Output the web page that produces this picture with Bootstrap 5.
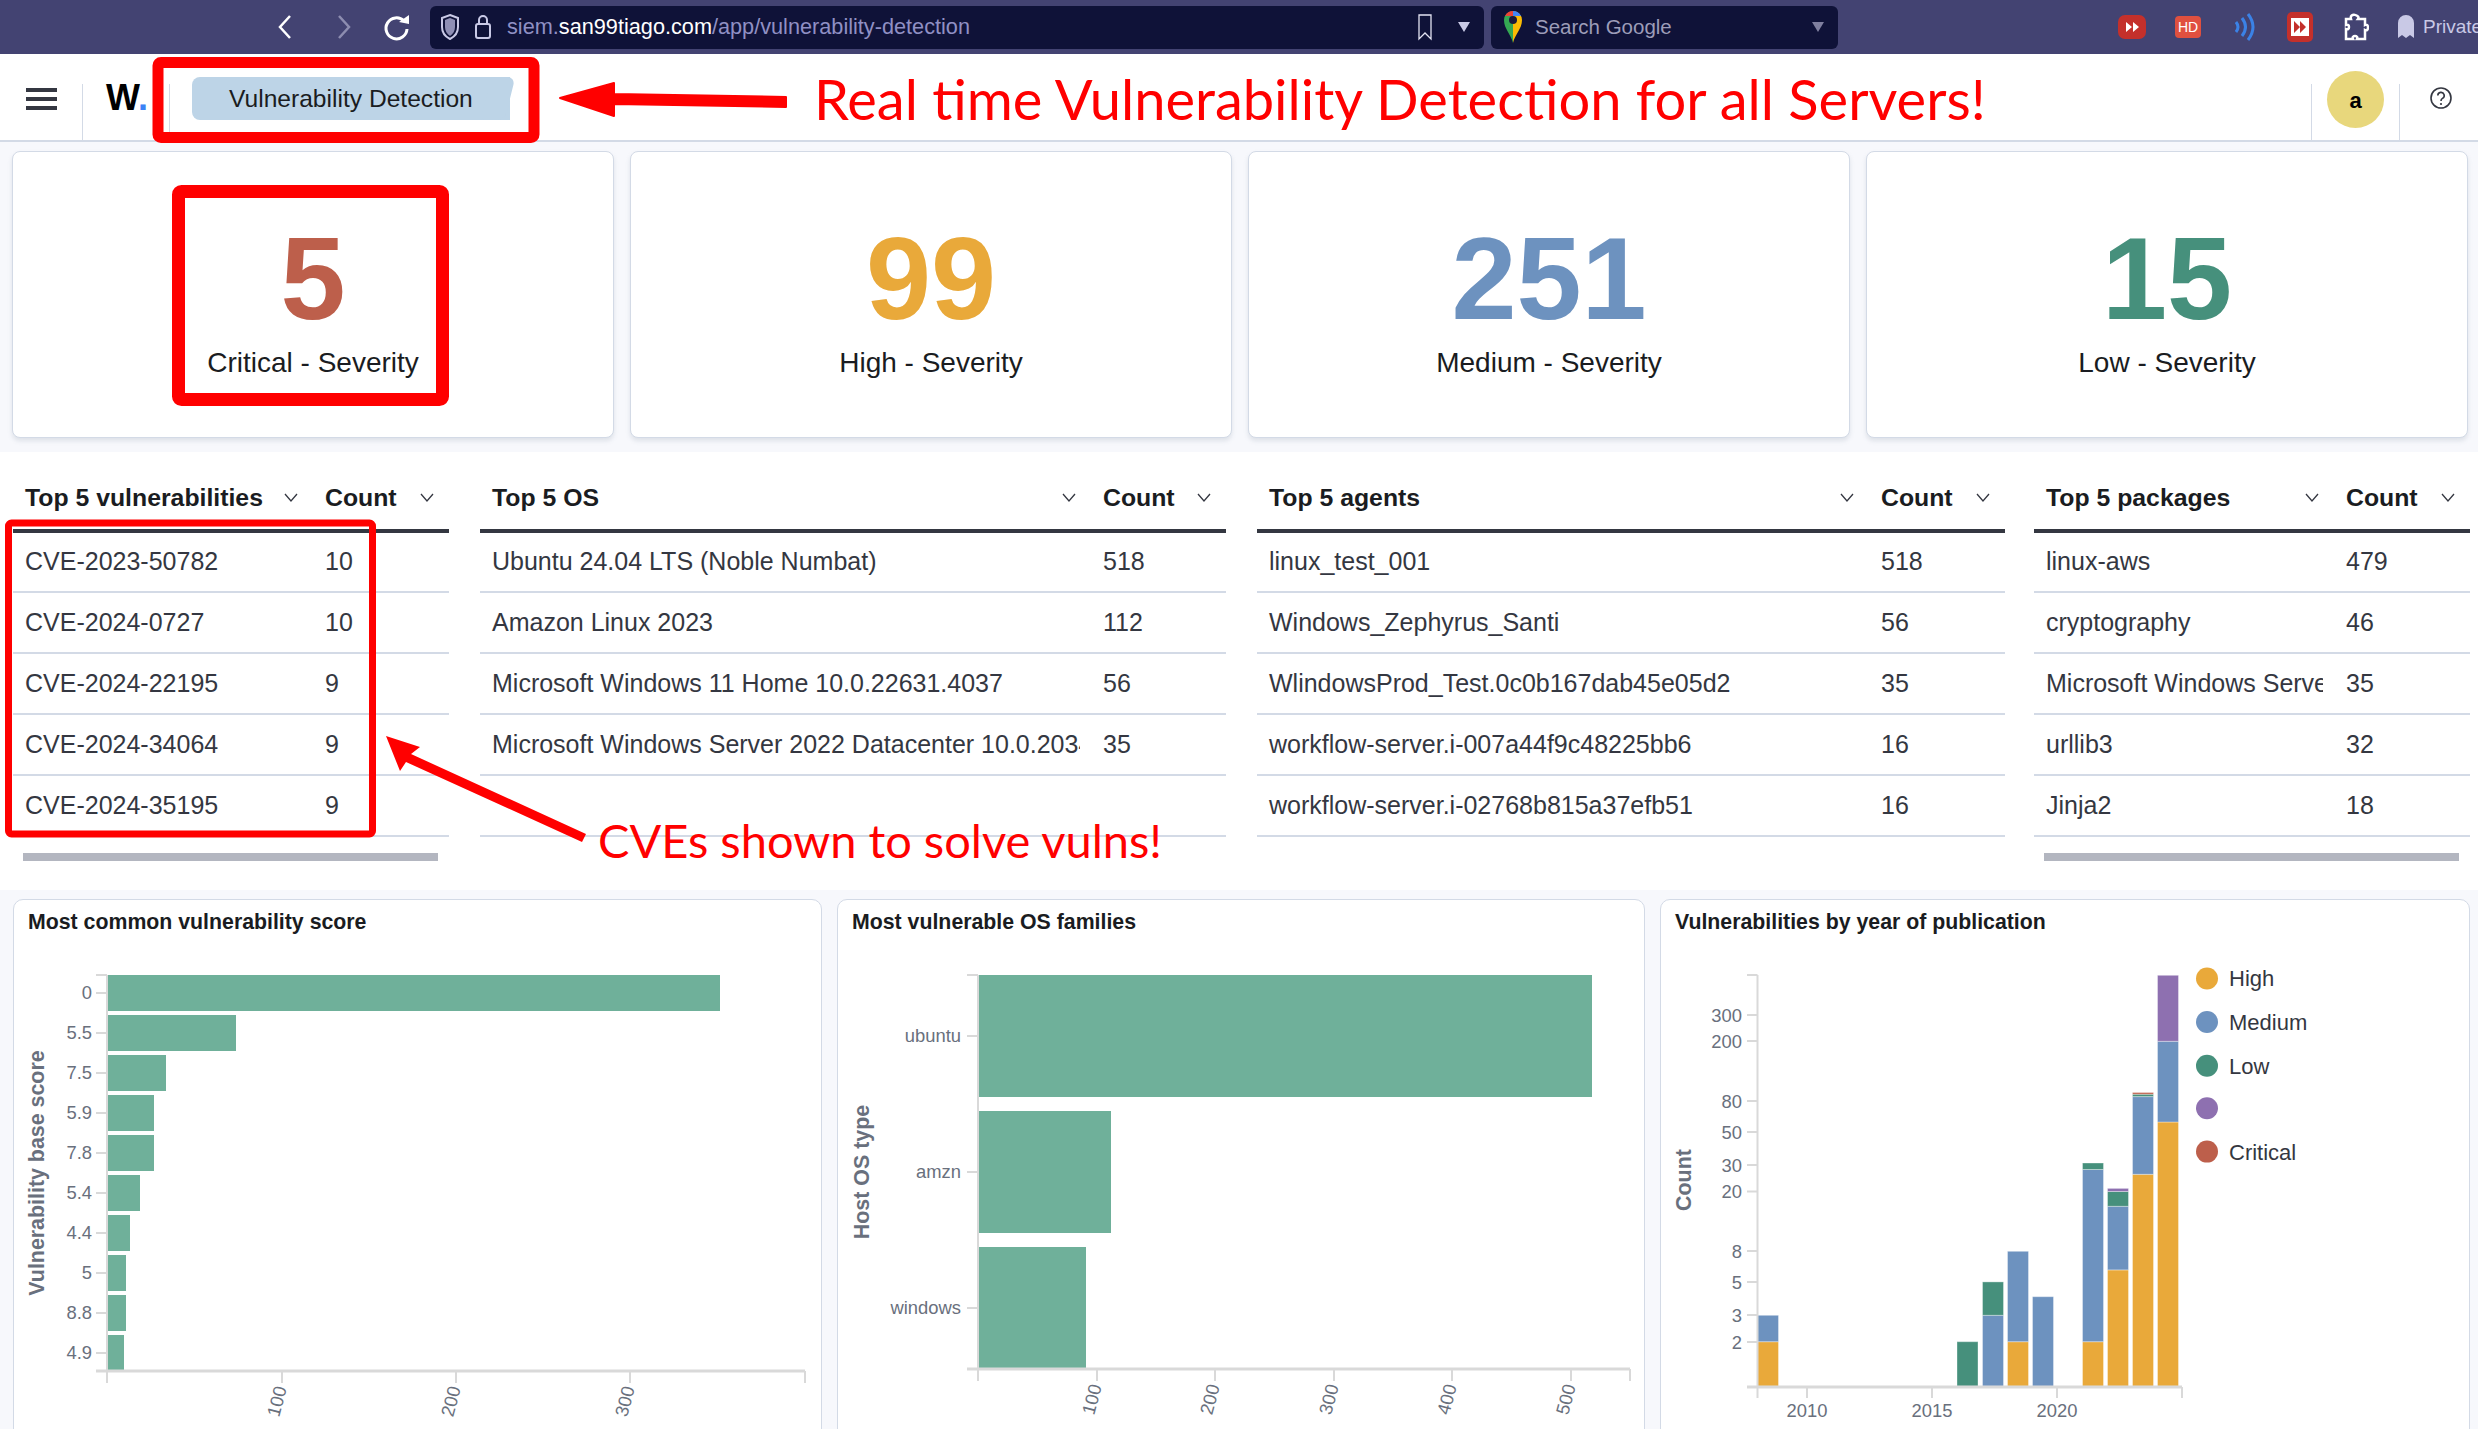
<!DOCTYPE html>
<html lang="en">
<head>
    <meta charset="UTF-8">
    <meta name="viewport" content="width=device-width, initial-scale=1.0">
    <title>Vulnerability Detection</title>
    <link href="https://cdn.jsdelivr.net/npm/bootstrap@5.3.0/dist/css/bootstrap.min.css" rel="stylesheet">
    <script src="https://cdn.jsdelivr.net/npm/bootstrap@5.3.0/dist/js/bootstrap.bundle.min.js"></script>
    <style>
        html, body { height: 100%; overflow: hidden; }
        body { font-family: "Liberation Sans", sans-serif; background-color: #f7f8fc; color: #343741; position: relative; }

        /* browser chrome */
        .browser-bar { height: 54px; background-color: #434372; padding-left: 276px; }
        .nav-ico { width: 36px; height: 30px; flex: none; }
        .nav-back { margin-right: 23px; }
        .nav-fwd { margin-right: 9px; }
        .url-box, .search-box { height: 43px; background-color: #0f1238; border-radius: 6px; font-size: 21.7px; }
        .url-box { width: 1054px; margin-left: 14px; padding: 0 13px 0 10px; color: #9090c4; flex: none; }
        .url-box b { font-weight: 400; color: #fff; }
        .shield-ico { margin-right: 14px; }
        .lock-ico { margin-right: 15px; }
        .search-box { width: 347px; margin-left: 7px; padding: 0 13px 0 12px; color: #9d9db9; font-size: 20.5px; flex: none; }
        .pin-ico { margin-right: 12px; }
        .ext-area { margin-left: 280px; color: #c9c9e6; font-size: 19px; white-space: nowrap; flex: none; }
        .ext-1 { margin-right: 29px; }
        .ext-2 { margin-right: 31px; }
        .ext-3 { margin-right: 31px; }
        .ext-4 { margin-right: 28px; }
        .ext-5 { margin-right: 28px; }
        .ext-6 { margin-right: 8px; }

        /* app header */
        .app-head { height: 88px; background: #fff; border-bottom: 2px solid #d3dae6; }
        .head-cell { height: 58px; margin-top: 30px; }
        .burger { width: 83px; border-right: 1px solid #d3dae6; padding: 4px 0 0 26px; }
        .burger span { display: block; width: 31px; height: 4px; background: #343741; margin-bottom: 5px; }
        .logo-cell { width: 87px; border-right: 1px solid #d3dae6; padding: 0 0 0 23px; font: 700 36px/28px "Liberation Sans", sans-serif; color: #000; }
        .logo-cell i { font-style: normal; color: #3b82f6; }
        .crumb { position: relative; margin: -7px 0 0 22px; height: 43px; width: 318px; background: #bdd4e7; border-radius: 8px 0 0 8px; font-size: 24.6px; line-height: 43px; padding-left: 37px; color: #1a1c21; }
        .crumb::after { content: ""; position: absolute; top: 0; right: 0; width: 24px; height: 43px; background: #bdd4e7; border-radius: 4px 8px 8px 4px; transform: skewX(-14deg); z-index: 0; }
        .crumb span { position: relative; z-index: 1; }
        .head-right { width: 89px; border-left: 1px solid #d3dae6; border-right: 1px solid #d3dae6; }
        .avatar { width: 57px; height: 57px; border-radius: 50%; background: #e8d77c; color: #000; font-size: 22px; font-weight: 700; margin-top: -13px; padding-top: 2px; }
        .help-cell { width: 78px; padding: 2px 0 0 4px; }

        /* severity cards */
        .sev-wrap { padding: 9px 10px 14px 12px; }
        .sev-row { --bs-gutter-x: 16px; }
        .sev-card { height: 287px; background: #fff; border: 1px solid #d3dae6; border-radius: 8px; box-shadow: 0 3px 4px rgba(152,162,179,.25); }
        .sev-num { font-weight: 700; font-size: 117px; line-height: 117px; margin-top: 68px; }
        .sev-label { font-size: 28px; line-height: 32px; margin-top: 10px; color: #1a1c21; }

        /* tables */
        .tables-wrap { background: #fff; height: 438px; padding: 0 7px 0 13px; display: grid; grid-template-columns: 436px 746px 748px 436px; gap: 31px; }
        .tables-wrap > :last-child { margin: 0 2px 0 -2px; }
        .top-table { table-layout: fixed; width: 100%; margin: 0; font-size: 25px; }
        .top-table th, .top-table td { padding: 0 0 0 4px; height: 61px; border-bottom: 2px solid #d3dae6; white-space: nowrap; overflow: hidden; vertical-align: middle; color: #343741; }
        .top-table th { height: 79px; padding-top: 16px; padding-bottom: 2px; font-size: 24.8px; font-weight: 700; border-bottom: 4px solid #343741; color: #1a1c21; }
        .th-in { padding: 0 15px 0 8px; }
        .cell-in { overflow: hidden; }
        .fake-scroll { height: 8px; background: #b3b6c0; margin: 16px 11px 0 10px; }

        /* chart panels */
        .panels { padding: 9px 8px 0 13px; display: grid; grid-template-columns: 809px 808px 810px; gap: 15px; }
        .chart-panel { background: #fff; border: 1px solid #d3dae6; border-radius: 10px 10px 0 0; height: 540px; overflow: hidden; }
        .chart-title { font: 700 21.3px/26px "Liberation Sans", sans-serif; color: #1a1c21; padding: 9px 0 0 14px; height: 49px; margin: 0; }
        .chart-panel svg { display: block; }
        .chart-panel text { font-family: "Liberation Sans", sans-serif; font-size: 18.4px; fill: #69707d; }
        .chart-panel .axis-title { font-weight: 700; font-size: 21.4px; }
        .chart-panel .legend-text { font-size: 22px; fill: #343741; }
        .axis { stroke: #d9d9d9; stroke-width: 2; }
        .axis-thick { stroke: #d9d9d9; stroke-width: 3; }

        /* annotations painted over the screenshot */
        .marks { position: absolute; left: 0; top: 0; pointer-events: none; }
        .marks text { font-family: "Lato", sans-serif; fill: #f00; }
    </style>
</head>
<body>
    <div class="browser-bar d-flex align-items-center">
        <svg class="nav-ico nav-back" viewBox="0 0 36 30"><path d="M14 4 L4 15 L14 26" fill="none" stroke="#fff" stroke-width="2.5"/></svg>
        <svg class="nav-ico nav-fwd" viewBox="0 0 36 30"><path d="M4 4 L14 15 L4 26" fill="none" stroke="#8d8db0" stroke-width="2.5"/></svg>
        <svg class="nav-ico" viewBox="0 0 36 30"><path d="M24 9 A10.5 10.5 0 1 0 27 17" fill="none" stroke="#fff" stroke-width="3"/><path d="M19 10 L29 3 L29 12 Z" fill="#fff"/></svg>
        <div class="url-box d-flex align-items-center">
            <svg width="20" height="28" viewBox="0 0 20 28" class="shield-ico"><path d="M10 2 L18 5 V14 C18 20 14 24 10 26 C6 24 2 20 2 14 V5 Z" fill="none" stroke="#c9c9e6" stroke-width="2"/><path d="M10 5 L15 7 V14 C15 18 13 21 10 23 C7 21 5 18 5 14 V7 Z" fill="#8f8fb5"/></svg>
            <svg width="18" height="26" viewBox="0 0 18 26" class="lock-ico"><rect x="2" y="10" width="14" height="14" rx="2" fill="none" stroke="#c9c9e6" stroke-width="2"/><path d="M5 10 V6 A4 4 0 0 1 13 6 V10" fill="none" stroke="#c9c9e6" stroke-width="2"/></svg>
            <span>siem.<b>san99tiago.com</b>/app/vulnerability-detection</span>
            <svg width="16" height="28" viewBox="0 0 16 28" class="ms-auto me-4"><path d="M2 2 H14 V26 L8 20 L2 26 Z" fill="none" stroke="#e3e3f2" stroke-width="1.3"/></svg>
            <svg width="14" height="12" viewBox="0 0 14 12"><path d="M1 1 H13 L7 11 Z" fill="#c9c9e6"/></svg>
        </div>
        <div class="search-box d-flex align-items-center">
            <svg width="20" height="34" viewBox="0 0 20 34" class="pin-ico"><path d="M10 33 C8 24 1 19 1 10 A9 9 0 0 1 10 1 V33 Z" fill="#34a853"/><path d="M10 33 C12 24 19 19 19 10 A9 9 0 0 0 10 1 V33 Z" fill="#fbbc04"/><path d="M2 6 A9 9 0 0 1 10 1 V6 Z" fill="#ea4335"/><path d="M10 1 A9 9 0 0 1 18 6 H10 Z" fill="#4285f4"/><circle cx="10" cy="10" r="4" fill="#1a1a3a"/></svg>
            <span>Search Google</span>
            <svg width="14" height="12" viewBox="0 0 14 12" class="ms-auto"><path d="M1 1 H13 L7 11 Z" fill="#7f7f9f"/></svg>
        </div>
        <div class="ext-area d-flex align-items-center">
            <svg width="28" height="24" viewBox="0 0 28 24" class="ext-1"><rect width="28" height="24" rx="7" fill="#c4302b"/><path d="M8 7 L14 12 L8 17 Z M15 7 L21 12 L15 17 Z" fill="#fff"/></svg>
            <svg width="26" height="22" viewBox="0 0 26 22" class="ext-2"><rect width="26" height="22" rx="4" fill="#e0503f"/><text x="13" y="16" text-anchor="middle" font-family="Liberation Sans" font-size="14" fill="#fff">HD</text></svg>
            <svg width="24" height="32" viewBox="0 0 24 32" class="ext-3"><path d="M4 11 Q8 16 4 21 M10 7 Q17 16 10 25 M16 3 Q26 16 16 29" fill="none" stroke="#3b82e6" stroke-width="3"/></svg>
            <svg width="26" height="30" viewBox="0 0 26 30" class="ext-4"><rect width="26" height="30" rx="5" fill="#c4302b"/><rect x="4" y="6" width="18" height="18" fill="#fff"/><path d="M7 9 L13 15 L7 21 Z M13 9 L19 15 L13 21 Z" fill="#c4302b"/></svg>
            <svg width="28" height="30" viewBox="0 0 28 30" class="ext-5"><path d="M10 7 H5 V13 C9 11 9 19 5 17 V27 H12 C10 23 18 23 16 27 H24 V18 C28 20 28 11 24 13 V7 H17 C20 3 8 0 10 7 Z" fill="none" stroke="#fff" stroke-width="2.5"/></svg>
            <svg width="18" height="26" viewBox="0 0 18 26" class="ext-6"><path d="M1 24 V9 A8 8 0 0 1 17 9 V24 L13 21 L9 24 L5 21 Z" fill="#c9c9e6"/></svg>
            <span>Private</span>
        </div>
    </div>

    <div class="app-head d-flex">
        <div class="head-cell burger"><span></span><span></span><span></span></div>
        <div class="head-cell logo-cell">W<i>.</i></div>
        <div class="head-cell"><div class="crumb"><span>Vulnerability Detection</span></div></div>
        <div class="head-cell head-right ms-auto d-flex justify-content-center">
            <div class="avatar d-flex align-items-center justify-content-center">a</div>
        </div>
        <div class="head-cell help-cell d-flex justify-content-center">
            <svg width="24" height="24" viewBox="0 0 24 24"><circle cx="12" cy="12" r="10" fill="none" stroke="#343741" stroke-width="1.6"/><path d="M8.8 9.5 A3.2 3.2 0 1 1 13.5 12.4 C12.4 13 12 13.6 12 15" fill="none" stroke="#343741" stroke-width="1.6"/><circle cx="12" cy="18" r="1.1" fill="#343741"/></svg>
        </div>
    </div>

    <div class="sev-wrap">
        <div class="row sev-row">
            <div class="col-3"><div class="sev-card text-center"><div class="sev-num" style="color:#bd5f4b">5</div><div class="sev-label">Critical - Severity</div></div></div>
            <div class="col-3"><div class="sev-card text-center"><div class="sev-num" style="color:#e9a93a">99</div><div class="sev-label">High - Severity</div></div></div>
            <div class="col-3"><div class="sev-card text-center"><div class="sev-num" style="color:#6d92bf">251</div><div class="sev-label">Medium - Severity</div></div></div>
            <div class="col-3"><div class="sev-card text-center"><div class="sev-num" style="color:#46907c">15</div><div class="sev-label">Low - Severity</div></div></div>
        </div>
    </div>

    <div class="tables-wrap" id="tables"></div>

    <div class="panels">
        <div class="chart-panel">
            <h6 class="chart-title">Most common vulnerability score</h6>
            <svg width="807" height="490" viewBox="14 950 807 490">
                <g fill="#6fb09a">
                    <rect x="107" y="976" width="613" height="36"/>
                    <rect x="107" y="1016" width="129" height="36"/>
                    <rect x="107" y="1056" width="59" height="36"/>
                    <rect x="107" y="1096" width="47" height="36"/>
                    <rect x="107" y="1136" width="47" height="36"/>
                    <rect x="107" y="1176" width="33" height="36"/>
                    <rect x="107" y="1216" width="23" height="36"/>
                    <rect x="107" y="1256" width="19" height="36"/>
                    <rect x="107" y="1296" width="19" height="36"/>
                    <rect x="107" y="1336" width="17" height="36"/>
                </g>
                <path class="axis" d="M107 976 V1372 M96 976 H107 M96 994 H107 M96 1034 H107 M96 1074 H107 M96 1114 H107 M96 1154 H107 M96 1194 H107 M96 1234 H107 M96 1274 H107 M96 1314 H107 M96 1354 H107"/>
                <path class="axis-thick" d="M96 1372 H805"/>
                <path class="axis" d="M107 1372 V1384 M282 1372 V1384 M456 1372 V1384 M630 1372 V1384 M805 1372 V1384"/>
                <g text-anchor="end">
                    <text x="92" y="1000">0</text><text x="92" y="1040">5.5</text><text x="92" y="1080">7.5</text><text x="92" y="1120">5.9</text><text x="92" y="1160">7.8</text>
                    <text x="92" y="1200">5.4</text><text x="92" y="1240">4.4</text><text x="92" y="1280">5</text><text x="92" y="1320">8.8</text><text x="92" y="1360">4.9</text>
                </g>
                <g text-anchor="middle">
                    <text transform="translate(283 1404) rotate(-75)">100</text>
                    <text transform="translate(457 1404) rotate(-75)">200</text>
                    <text transform="translate(631 1404) rotate(-75)">300</text>
                    <text class="axis-title" transform="translate(44 1174) rotate(-90)">Vulnerability base score</text>
                </g>
            </svg>
        </div>
        <div class="chart-panel">
            <h6 class="chart-title">Most vulnerable OS families</h6>
            <svg width="806" height="490" viewBox="838 950 806 490">
                <g fill="#6fb09a">
                    <rect x="978" y="976" width="614" height="122"/>
                    <rect x="978" y="1112" width="133" height="122"/>
                    <rect x="978" y="1248" width="108" height="121"/>
                </g>
                <path class="axis" d="M978 976 V1370 M967 976 H978 M967 1037 H978 M967 1173 H978 M967 1309 H978"/>
                <path class="axis-thick" d="M967 1370 H1630"/>
                <path class="axis" d="M978 1370 V1382 M1097 1370 V1382 M1215 1370 V1382 M1334 1370 V1382 M1452 1370 V1382 M1571 1370 V1382 M1630 1370 V1382"/>
                <g text-anchor="end">
                    <text x="961" y="1043">ubuntu</text><text x="961" y="1179">amzn</text><text x="961" y="1315">windows</text>
                </g>
                <g text-anchor="middle">
                    <text transform="translate(1098 1402) rotate(-75)">100</text>
                    <text transform="translate(1216 1402) rotate(-75)">200</text>
                    <text transform="translate(1335 1402) rotate(-75)">300</text>
                    <text transform="translate(1453 1402) rotate(-75)">400</text>
                    <text transform="translate(1572 1402) rotate(-75)">500</text>
                    <text class="axis-title" transform="translate(869 1173) rotate(-90)">Host OS type</text>
                </g>
            </svg>
        </div>
        <div class="chart-panel">
            <h6 class="chart-title">Vulnerabilities by year of publication</h6>
            <svg width="808" height="490" viewBox="1662 950 808 490">
                <g stroke="#fff" stroke-opacity=".35" stroke-width="1">
                    <rect x="1758.5" y="1342.7" width="21" height="44.7" fill="#e9a93a"/>
                    <rect x="1758.5" y="1316.3" width="21" height="26.4" fill="#6d92bf"/>
                    <rect x="1958" y="1342.7" width="21" height="44.7" fill="#46907c"/>
                    <rect x="1983.5" y="1316.3" width="21" height="71.1" fill="#6d92bf"/>
                    <rect x="1983.5" y="1282.9" width="21" height="33.4" fill="#46907c"/>
                    <rect x="2008.5" y="1342.7" width="21" height="44.7" fill="#e9a93a"/>
                    <rect x="2008.5" y="1252.3" width="21" height="90.4" fill="#6d92bf"/>
                    <rect x="2033.5" y="1297.7" width="21" height="89.7" fill="#6d92bf"/>
                    <rect x="2083.5" y="1342.7" width="21" height="44.7" fill="#e9a93a"/>
                    <rect x="2083.5" y="1170.5" width="21" height="172.2" fill="#6d92bf"/>
                    <rect x="2083.5" y="1164" width="21" height="6.5" fill="#46907c"/>
                    <rect x="2108.5" y="1270.9" width="21" height="116.5" fill="#e9a93a"/>
                    <rect x="2108.5" y="1207.3" width="21" height="63.6" fill="#6d92bf"/>
                    <rect x="2108.5" y="1192.5" width="21" height="14.8" fill="#46907c"/>
                    <rect x="2108.5" y="1189.4" width="21" height="3.1" fill="#8e70b0"/>
                    <rect x="2133.5" y="1175.3" width="21" height="212.1" fill="#e9a93a"/>
                    <rect x="2133.5" y="1097.6" width="21" height="77.7" fill="#6d92bf"/>
                    <rect x="2133.5" y="1095.2" width="21" height="2.4" fill="#46907c"/>
                    <rect x="2133.5" y="1093.5" width="21" height="1.7" fill="#bd5f4b"/>
                    <rect x="2158.5" y="1123" width="21" height="264.4" fill="#e9a93a"/>
                    <rect x="2158.5" y="1042.3" width="21" height="80.7" fill="#6d92bf"/>
                    <rect x="2158.5" y="976.3" width="21" height="66" fill="#8e70b0"/>
                </g>
                <path class="axis" d="M1758.5 976 V1388 M1748 976 H1758.5 M1748 1016 H1758.5 M1748 1042 H1758.5 M1748 1102 H1758.5 M1748 1133 H1758.5 M1748 1166 H1758.5 M1748 1192.5 H1758.5 M1748 1252 H1758.5 M1748 1283 H1758.5 M1748 1316 H1758.5 M1748 1343 H1758.5"/>
                <path class="axis-thick" d="M1748 1388 H2183"/>
                <path class="axis" d="M1758.5 1388 V1399 M1808 1388 V1399 M1933 1388 V1399 M2058 1388 V1399 M2183 1388 V1399"/>
                <g text-anchor="end">
                    <text x="1743" y="1023">300</text><text x="1743" y="1049">200</text><text x="1743" y="1109">80</text><text x="1743" y="1140">50</text><text x="1743" y="1173">30</text>
                    <text x="1743" y="1199">20</text><text x="1743" y="1259">8</text><text x="1743" y="1290">5</text><text x="1743" y="1323">3</text><text x="1743" y="1350">2</text>
                </g>
                <g text-anchor="middle">
                    <text x="1808" y="1418">2010</text><text x="1933" y="1418">2015</text><text x="2058" y="1418">2020</text>
                    <text class="axis-title" transform="translate(1692 1181) rotate(-90)">Count</text>
                </g>
                <circle cx="2208" cy="979.5" r="11" fill="#e9a93a"/><text class="legend-text" x="2230" y="987">High</text>
                <circle cx="2208" cy="1023" r="11" fill="#6d92bf"/><text class="legend-text" x="2230" y="1031">Medium</text>
                <circle cx="2208" cy="1066.7" r="11" fill="#46907c"/><text class="legend-text" x="2230" y="1075">Low</text>
                <circle cx="2208" cy="1109.3" r="11" fill="#8e70b0"/>
                <circle cx="2208" cy="1152.6" r="11" fill="#bd5f4b"/><text class="legend-text" x="2230" y="1161">Critical</text>
            </svg>
        </div>
    </div>

    <svg class="marks" width="2478" height="1429" viewBox="0 0 2478 1429">
        <g fill="none" stroke="#f00">
            <rect x="158" y="62.5" width="376" height="75" rx="3" stroke-width="11"/>
            <rect x="178.5" y="191.5" width="264" height="208" rx="3" stroke-width="13"/>
            <rect x="8.5" y="523" width="364" height="311" rx="3" stroke-width="7"/>
        </g>
        <path d="M786 97 L786 107 L614 104 L614 116 L560 98 L614 83 L614 94 Z" fill="#f00" stroke="#f00" stroke-linejoin="round" stroke-width="2"/>
        <path d="M386 736 L420 747 L411 754 L586 834 L582 842 L406 762 L400 771 Z" fill="#f00"/>
        <text x="814" y="120" font-size="56">Real time Vulnerability Detection for all Servers!</text>
        <text x="598" y="858" font-size="47">CVEs shown to solve vulns!</text>
    </svg>

    <script>
        const tables = [
            { head: 'Top 5 vulnerabilities', nameWidth: 300, rows: [['CVE-2023-50782', 10], ['CVE-2024-0727', 10], ['CVE-2024-22195', 9], ['CVE-2024-34064', 9], ['CVE-2024-35195', 9]], bar: true },
            { head: 'Top 5 OS', nameWidth: 611, rows: [['Ubuntu 24.04 LTS (Noble Numbat)', 518], ['Amazon Linux 2023', 112], ['Microsoft Windows 11 Home 10.0.22631.4037', 56], ['Microsoft Windows Server 2022 Datacenter 10.0.20348', 35], ['', '']] },
            { head: 'Top 5 agents', nameWidth: 612, rows: [['linux_test_001', 518], ['Windows_Zephyrus_Santi', 56], ['WlindowsProd_Test.0c0b167dab45e05d2', 35], ['workflow-server.i-007a44f9c48225bb6', 16], ['workflow-server.i-02768b815a37efb51', 16]] },
            { head: 'Top 5 packages', nameWidth: 300, rows: [['linux-aws', 479], ['cryptography', 46], ['Microsoft Windows Server 2022', 35], ['urllib3', 32], ['Jinja2', 18]], bar: true }
        ];
        const chevron = '<svg width="14" height="9" viewBox="0 0 14 9" class="flex-shrink-0"><path d="M1 1 L7 8 L13 1" fill="none" stroke="#343741" stroke-width="1.3"/></svg>';
        const thCell = (text) => `<th><div class="th-in d-flex justify-content-between align-items-center"><span class="text-nowrap">${text}</span>${chevron}</div></th>`;
        document.getElementById('tables').innerHTML = tables.map(t => `
            <div>
                <table class="top-table">
                    <colgroup><col style="width:${t.nameWidth}px"><col></colgroup>
                    <thead><tr>${thCell(t.head)}${thCell('Count')}</tr></thead>
                    <tbody>${t.rows.map(r => `<tr><td><div class="cell-in ps-2" style="width:${t.nameWidth - 15}px">${r[0]}</div></td><td><div class="ps-2">${r[1]}</div></td></tr>`).join('')}</tbody>
                </table>
                ${t.bar ? '<div class="fake-scroll"></div>' : ''}
            </div>`).join('');
    </script>
</body>
</html>
